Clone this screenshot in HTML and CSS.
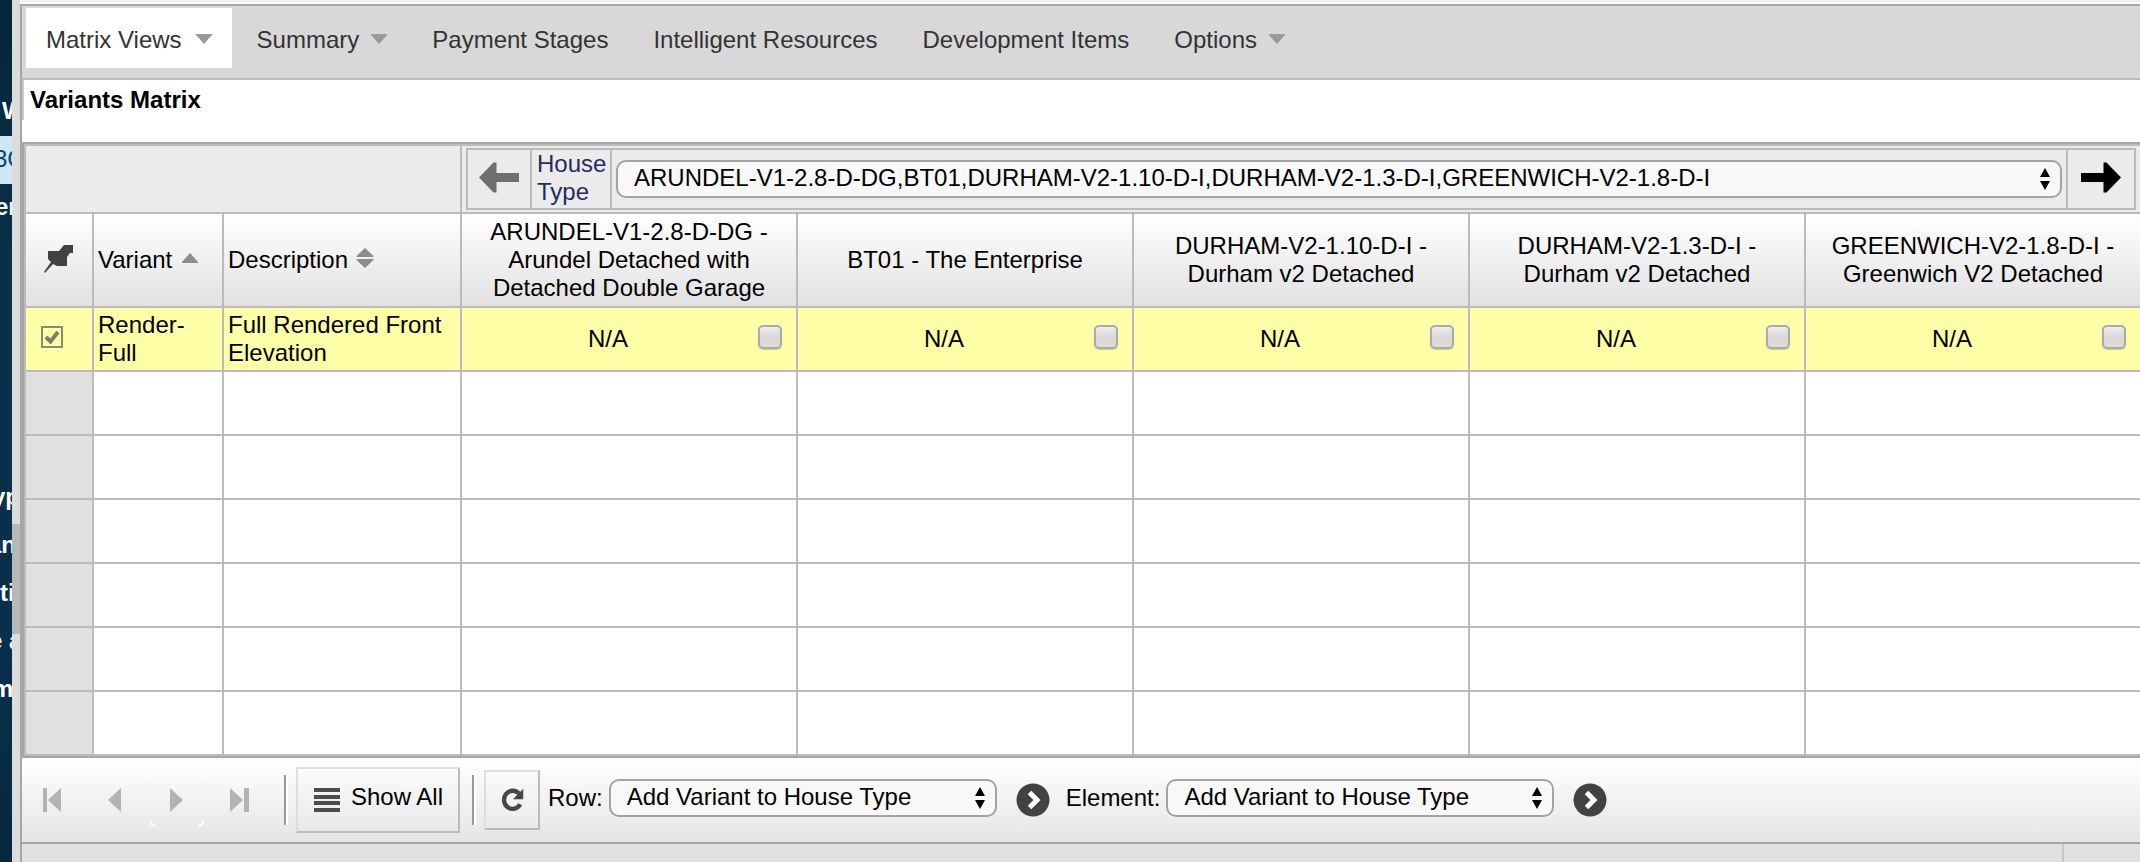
FILE: index.html
```html
<!DOCTYPE html>
<html lang="en">
<head>
<meta charset="utf-8">
<title>Variants Matrix</title>
<link rel="stylesheet" href="styles.css">
</head>
<body>
<svg class="defs" aria-hidden="true">
  <symbol id="caret" viewBox="0 0 16 10"><path d="M0 0h16v1L8 10 0 1z" fill="#999"/></symbol>
  <symbol id="updown" viewBox="0 0 10 22"><path d="M5 0l5 9H0zM5 22l5-9H0z" fill="#000"/></symbol>
  <symbol id="go" viewBox="0 0 34 34"><circle cx="17" cy="17" r="16.500" fill="#424242"/><path d="M13.500 9.500l7.500 7.500-7.500 7.500" fill="none" stroke="#fff" stroke-width="5"/></symbol>
</svg>
<div class="app">
  <aside class="sidebar">
    <span class="side side-w">W</span>
    <span class="side side-active">3C</span>
    <span class="side side-er">er</span>
    <span class="side side-gap side-yp">yp</span>
    <span class="side side-an">an</span>
    <span class="side side-ti">tio</span>
    <span class="side side-ea">e a</span>
    <span class="side side-m">m</span>
  </aside>
  <div class="splitter"><div class="grip"></div></div>
  <main class="main">
    <nav class="nav">
      <button class="tab tab-on">Matrix Views <svg class="caret"><use href="#caret"/></svg></button>
      <button class="tab">Summary <svg class="caret"><use href="#caret"/></svg></button>
      <button class="tab">Payment Stages</button>
      <button class="tab">Intelligent Resources</button>
      <button class="tab">Development Items</button>
      <button class="tab">Options <svg class="caret"><use href="#caret"/></svg></button>
    </nav>
    <header class="title"><h1>Variants Matrix</h1></header>
    <div class="grid-wrap">
      <table class="grid">
        <colgroup><col class="c-pin"><col class="c-var"><col class="c-desc"><col><col><col><col><col></colgroup>
        <thead>
          <tr class="pager-row">
            <td colspan="3"></td>
            <td colspan="5">
              <div class="pager">
                <button class="arrow arrow-left" aria-label="Previous house types"><svg viewBox="0 0 40 31" width="40" height="31"><path d="M0 15.500L14.500 0.500h3V11H40v9H17.500v10.500h-3z" fill="#6f6f6f"/></svg></button>
                <label class="pager-label" for="house">House Type</label>
                <div class="pager-select">
                  <span class="select"><select id="house"><option>ARUNDEL-V1-2.8-D-DG,BT01,DURHAM-V2-1.10-D-I,DURHAM-V2-1.3-D-I,GREENWICH-V2-1.8-D-I</option></select><svg class="updown"><use href="#updown"/></svg></span>
                </div>
                <button class="arrow arrow-right" aria-label="Next house types"><svg viewBox="0 0 40 31" width="40" height="31"><path d="M40 15.500L25.500 0.500h-3V11H0v9h22.500v10.500h3z" fill="#000"/></svg></button>
              </div>
            </td>
          </tr>
          <tr class="heads">
            <th class="pin"><svg viewBox="0 0 30 30" width="30" height="30"><path d="M20 1h9v8h-3l-3 4v9H13L9 20 1 29 0 28 7 18 4 15V7h11z" fill="#424242"/></svg></th>
            <th class="left"><span class="sort">Variant <svg viewBox="0 0 16 10" width="16" height="10"><path d="M8 0l8 9v1H0V9z" fill="#8c8c8c"/></svg></span></th>
            <th class="left"><span class="sort sort-both">Description <svg viewBox="0 0 18 20" width="18" height="20"><path d="M9 0l8.500 8v1H.5V8zM9 20l8.500-8v-1H.5v1z" fill="#8c8c8c"/></svg></span></th>
            <th>ARUNDEL-V1-2.8-D-DG - Arundel Detached with Detached Double Garage</th>
            <th>BT01 - The Enterprise</th>
            <th>DURHAM-V2-1.10-D-I -<br>Durham v2 Detached</th>
            <th>DURHAM-V2-1.3-D-I -<br>Durham v2 Detached</th>
            <th>GREENWICH-V2-1.8-D-I -<br>Greenwich V2 Detached</th>
          </tr>
        </thead>
        <tbody>
          <tr class="on">
            <td class="pick"><label class="row-pick"><input type="checkbox" checked aria-label="Select row"><svg viewBox="0 0 22 22"><path d="M5 11l4.500 4.500L17 6" fill="none" stroke="#7d7d76" stroke-width="4"/></svg></label></td>
            <td>Render-Full</td>
            <td>Full Rendered Front Elevation</td>
            <td><label class="na"><span>N/A</span><input type="checkbox" class="box"></label></td>
            <td><label class="na"><span>N/A</span><input type="checkbox" class="box"></label></td>
            <td><label class="na"><span>N/A</span><input type="checkbox" class="box"></label></td>
            <td><label class="na"><span>N/A</span><input type="checkbox" class="box"></label></td>
            <td><label class="na"><span>N/A</span><input type="checkbox" class="box"></label></td>
          </tr>
          <tr><td></td><td></td><td></td><td></td><td></td><td></td><td></td><td></td></tr>
          <tr><td></td><td></td><td></td><td></td><td></td><td></td><td></td><td></td></tr>
          <tr><td></td><td></td><td></td><td></td><td></td><td></td><td></td><td></td></tr>
          <tr><td></td><td></td><td></td><td></td><td></td><td></td><td></td><td></td></tr>
          <tr><td></td><td></td><td></td><td></td><td></td><td></td><td></td><td></td></tr>
          <tr><td></td><td></td><td></td><td></td><td></td><td></td><td></td><td></td></tr>
        </tbody>
      </table>
    </div>
    <div class="toolbar">
      <div class="steps">
        <button class="step" aria-label="First"><svg viewBox="0 0 22 26" width="22" height="26"><path d="M1 1h4v24H1zM19 1v24L6 13z" fill="#b3b3b3"/></svg></button>
        <button class="step" aria-label="Previous"><svg viewBox="0 0 22 26" width="22" height="26"><path d="M17 1v24L4 13z" fill="#b3b3b3"/></svg></button>
        <button class="step" aria-label="Next"><svg viewBox="0 0 54 54" width="54" height="54"><path d="M20 15v24l13-12z" fill="#b3b3b3"/><path d="M1 6q0-5 5-5M48 1q5 0 5 5M1 48q0 5 5 5M48 53q5 0 5-5" fill="none" stroke="#fff" stroke-width="2"/></svg></button>
        <button class="step" aria-label="Last"><svg viewBox="0 0 22 26" width="22" height="26"><path d="M16 1h5v24h-5zM2 1v24l13-12z" fill="#b3b3b3"/></svg></button>
      </div>
      <span class="sep"></span>
      <button class="tool show-all"><svg viewBox="0 0 28 26" width="28" height="26"><path d="M1 1h26v4H1zM1 8h26v4H1zM1 14h26v4H1zM1 21h26v4H1z" fill="#4c4c4c"/></svg><span>Show All</span></button>
      <span class="sep"></span>
      <button class="tool refresh" aria-label="Refresh"><svg viewBox="0 0 30 30" width="26" height="30"><path d="M23 7.500A10 10.500 0 1 0 24.500 20" fill="none" stroke="#474747" stroke-width="5"/><path d="M28 2v12H16z" fill="#474747"/></svg></button>
      <label class="name" for="row">Row:</label>
      <span class="select select-small"><select id="row"><option>Add Variant to House Type</option></select><svg class="updown"><use href="#updown"/></svg></span>
      <button class="go" aria-label="Apply to row"><svg><use href="#go"/></svg></button>
      <label class="name" for="element">Element:</label>
      <span class="select select-small"><select id="element"><option>Add Variant to House Type</option></select><svg class="updown"><use href="#updown"/></svg></span>
      <button class="go" aria-label="Apply to element"><svg><use href="#go"/></svg></button>
    </div>
    <footer class="status"><div class="status-main"></div><div class="status-end"></div></footer>
  </main>
</div>
</body>
</html>
```
FILE: styles.css
```css
* { box-sizing: border-box; }
html, body { height: 100%; }
body {
  margin: 0;
  overflow: hidden;
  font: 24px/28px "Liberation Sans", Arial, sans-serif;
  color: #000;
  background: #fff;
}
button, select { font: inherit; color: inherit; }
button { border: 0; background: none; padding: 0; }
svg { display: block; flex: none; }
.defs { display: none; }
.app { display: flex; min-height: 100vh; }

.sidebar {
  flex: none;
  width: 12px;
  overflow: hidden;
  padding-top: 88px;
  background: linear-gradient(#05263a, #093049 30%, #08304a 75%, #07283e);
  color: #fff;
  font-weight: bold;
}
.side { display: block; height: 48px; line-height: 46px; white-space: nowrap; }
.side-w { text-indent: 2px; }
.side-active { background: #cce8f2; color: #0b4468; font-weight: normal; text-indent: -6px; }
.side-er { text-indent: -5px; }
.side-gap { margin-top: 242px; }
.side-yp { text-indent: -8px; }
.side-an { text-indent: -12px; }
.side-ea { text-indent: -11px; }
.side-m { text-indent: -8px; }

.splitter { flex: none; width: 8px; padding-top: 524px; background: #dcdcdc; }
.grip { height: 110px; background: #b8b8b8; }

.main {
  flex: 1;
  min-width: 0;
  overflow: hidden;
  display: flex;
  flex-direction: column;
  border-top: 2px solid #f0f0f0;
}
.nav {
  display: flex;
  gap: 5px;
  margin-top: 2px;
  padding: 2px 4px 10px;
  border: solid #a6a6a6;
  border-width: 2px 0 0 2px;
  background: #d8d8d8;
  color: #333;
}
.tab { display: flex; align-items: center; gap: 12px; height: 60px; padding: 4px 20px 0; white-space: nowrap; }
.tab-on { gap: 14px; background: #fff; }
.caret { width: 16px; height: 10px; margin-bottom: 2px; }

.title { border: solid #a6a6a6; border-width: 0 0 0 2px; border-top: 2px solid #bbb; padding: 0 0 22px; }
.title h1 { margin: 0; padding: 6px 6px; border-left: 2px solid #ccc; font-size: 24px; line-height: 28px; }

.grid-wrap { border: solid #a6a6a6; border-width: 2px 0 2px 4px; overflow: hidden; }
.grid {
  width: calc(100% + 2px);
  table-layout: fixed;
  border-collapse: separate;
  border-spacing: 0;
  border: solid #bbb;
  border-width: 2px 0 0 2px;
}
.c-pin { width: 68px; }
.c-var { width: 130px; }
.c-desc { width: 238px; }
.grid td, .grid th { padding: 0 4px; border: solid #bbb; border-width: 0 2px 2px 0; font-weight: normal; height: 64px; text-align: left; }
.grid tbody td:first-child { background: #e0e0e0; }
.grid tbody .on td { background: #ffffa8; }
.pager-row td { background: #ebebeb; }
.grid .pager-row td { padding: 2px 4px; height: 68px; }
.grid .heads th { height: 94px; padding: 4px 20px; text-align: center; background: linear-gradient(#fff, #e1e1e1); }
.grid .heads .left { padding: 0 4px; text-align: left; }
.grid .heads .pin { padding: 0 18px 2px; }
.sort { display: flex; align-items: center; gap: 10px; }
.sort-both { gap: 8px; }
.sort svg { margin-bottom: 4px; }
.pager { display: flex; height: 62px; border: 2px solid #bbb; }
.arrow { display: flex; align-items: center; justify-content: center; width: 64px; padding-bottom: 4px; }
.arrow-left { border-right: 2px solid #bbb; }
.arrow-right { width: 68px; border-left: 2px solid #bbb; }
.pager-label { width: 80px; padding: 0 5px; border-right: 2px solid #bbb; color: #262a63; }
.pager-select { flex: 1; min-width: 0; display: flex; align-items: center; padding: 0 4px; }

.select { position: relative; display: block; width: 100%; }
.select select {
  appearance: none;
  display: block;
  width: 100%;
  height: 38px;
  margin: 0;
  padding: 0 32px 2px 16px;
  border: 2px solid #a3a3a3;
  border-radius: 10px;
  background: #f8f8f8;
  color: #000;
}
.updown { position: absolute; right: 12px; top: 8px; width: 10px; height: 22px; pointer-events: none; }

.grid .pick { padding: 0 15px; }
.row-pick { display: grid; width: 22px; height: 22px; margin-bottom: 4px; }
.row-pick input { grid-area: 1 / 1; appearance: none; width: 22px; height: 22px; margin: 0; border: 2px solid #8b8b73; }
.row-pick svg { grid-area: 1 / 1; width: 22px; height: 22px; }
.na { display: flex; align-items: center; }
.na span { flex: 1; text-align: center; }
.box {
  appearance: none;
  width: 24px;
  height: 24px;
  margin: 0 10px 4px 8px;
  border: 2px solid #aaa;
  border-radius: 5px;
  background: linear-gradient(#eee, #d8d8d8 50%, #ddd);
  box-shadow: 0 1px 1px #00000033;
}

.toolbar {
  display: flex;
  align-items: center;
  height: 86px;
  border: solid #a6a6a6;
  border-width: 0 0 2px 2px;
  background: linear-gradient(#fff, #e5e5e5);
}
.steps { display: flex; margin-right: 14px; }
.step { display: flex; align-items: center; justify-content: center; width: 62px; height: 54px; }
.sep { width: 4px; height: 50px; border-left: 2px solid #999; border-right: 2px solid #fff; }
.tool { display: flex; align-items: center; justify-content: center; gap: 10px; border: 2px solid; border-color: #ddd #bbb #bbb #ddd; }
.show-all { width: 164px; height: 66px; margin: 0 12px 0 8px; white-space: nowrap; }
.show-all span { padding-bottom: 6px; }
.refresh { width: 56px; height: 60px; margin: 0 8px; }
.name { margin-right: 6px; padding-bottom: 4px; }
.select-small { flex: none; width: 388px; margin-bottom: 4px; }
.go { margin: 0 16px 0 19px; }
.go svg { width: 34px; height: 34px; }

.status { flex: 1; display: flex; border-left: 2px solid #a6a6a6; background: #e0e0e0; }
.status-main { flex: 1; }
.status-end { width: 78px; border-left: 2px solid #c6c6c6; }
```
